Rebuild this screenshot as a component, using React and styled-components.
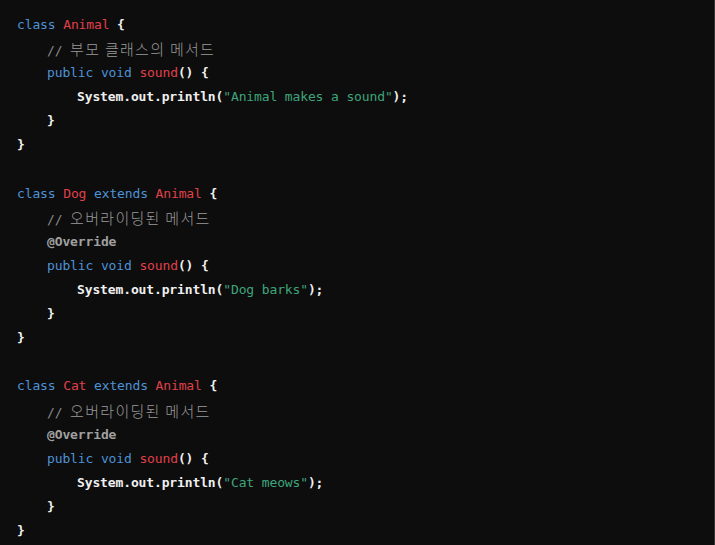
import React from "react";
import styled, { createGlobalStyle } from "styled-components";

const Global = createGlobalStyle`
  html, body {
    margin: 0;
    padding: 0;
    background: #0d0d0d;
  }
  #root {
    min-height: 100vh;
  }
`;

const CodeBlock = styled.pre`
  margin: 0;
  box-sizing: border-box;
  min-height: 545px;
  width: 715px;
  padding: 13px 16px 0 17px;
  background: #0d0d0d;
  border-right: 1px solid #333333;
  font-family: "DejaVu Sans Mono", "Noto Sans CJK KR", monospace;
  font-size: 13px;
  letter-spacing: -0.13px;
  line-height: 24px;
  color: #f2f2f2;
  overflow: hidden;
`;

const Line = styled.div`
  display: flex;
  align-items: baseline;
  height: 24.1px;
  padding-left: ${(p) => p.$indent * 30}px;
  white-space: pre;
`;

const colors = {
  plain: "#f0f0f0",
  keyword: "#4e93d6",
  title: "#e0404a",
  string: "#3fa57c",
  comment: "#8a8a8a",
  meta: "#a0a0a0",
};

const Token = styled.span`
  color: ${(p) => colors[p.$kind]};
  font-weight: ${(p) => (p.$kind === "plain" || p.$kind === "meta" ? 700 : 400)};
`;

const Hangul = styled.span`
  font-family: "Noto Sans CJK KR", sans-serif;
  font-size: 15px;
  font-weight: 300;
  letter-spacing: 1.3px;
  color: #9a9a9a;
`;

const K = (t) => ["keyword", t];
const T = (t) => ["title", t];
const P = (t) => ["plain", t];
const S = (t) => ["string", t];
const C = (t) => ["comment", t];
const M = (t) => ["meta", t];
const H = (t) => ["hangul", t];

const method = (text) => [
  [1, [K("public"), P(" "), K("void"), P(" "), T("sound"), P("() {")]],
  [2, [P("System.out.println("), S(`"${text}"`), P(");")]],
  [1, [P("}")]],
];

const lines = [
  [0, [K("class"), P(" "), T("Animal"), P(" {")]],
  [1, [C("// "), H("부모 클래스의 메서드")]],
  ...method("Animal makes a sound"),
  [0, [P("}")]],
  [0, []],
  [0, [K("class"), P(" "), T("Dog"), P(" "), K("extends"), P(" "), T("Animal"), P(" {")]],
  [1, [C("// "), H("오버라이딩된 메서드")]],
  [1, [M("@Override")]],
  ...method("Dog barks"),
  [0, [P("}")]],
  [0, []],
  [0, [K("class"), P(" "), T("Cat"), P(" "), K("extends"), P(" "), T("Animal"), P(" {")]],
  [1, [C("// "), H("오버라이딩된 메서드")]],
  [1, [M("@Override")]],
  ...method("Cat meows"),
  [0, [P("}")]],
];

export default function App() {
  return (
    <>
      <Global />
      <CodeBlock>
        {lines.map(([indent, tokens], i) => (
          <Line key={i} $indent={indent}>
            {tokens.map(([kind, text], j) =>
              kind === "hangul" ? (
                <Hangul key={j}>{text}</Hangul>
              ) : (
                <Token key={j} $kind={kind}>
                  {text}
                </Token>
              )
            )}
          </Line>
        ))}
      </CodeBlock>
    </>
  );
}
